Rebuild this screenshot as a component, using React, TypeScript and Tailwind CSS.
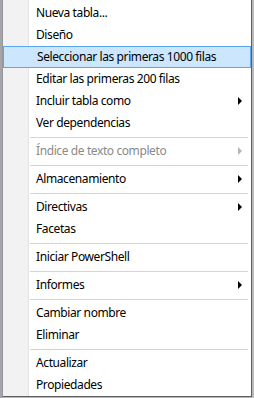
import React from 'react';

type Entry =
  | { kind: 'item'; label: string; sub?: boolean; disabled?: boolean; active?: boolean }
  | { kind: 'sep' };

const entries: Entry[] = [
  { kind: 'item', label: 'Nueva tabla...' },
  { kind: 'item', label: 'Diseño' },
  { kind: 'item', label: 'Seleccionar las primeras 1000 filas', active: true },
  { kind: 'item', label: 'Editar las primeras 200 filas' },
  { kind: 'item', label: 'Incluir tabla como', sub: true },
  { kind: 'item', label: 'Ver dependencias' },
  { kind: 'sep' },
  { kind: 'item', label: 'Índice de texto completo', sub: true, disabled: true },
  { kind: 'sep' },
  { kind: 'item', label: 'Almacenamiento', sub: true },
  { kind: 'sep' },
  { kind: 'item', label: 'Directivas', sub: true },
  { kind: 'item', label: 'Facetas' },
  { kind: 'sep' },
  { kind: 'item', label: 'Iniciar PowerShell' },
  { kind: 'sep' },
  { kind: 'item', label: 'Informes', sub: true },
  { kind: 'sep' },
  { kind: 'item', label: 'Cambiar nombre' },
  { kind: 'item', label: 'Eliminar' },
  { kind: 'sep' },
  { kind: 'item', label: 'Actualizar' },
  { kind: 'item', label: 'Propiedades' },
];

export default function App() {
  return (
    <div className="w-[254px] h-[398px] bg-[#b9b9b9] flex overflow-hidden">
      {/* window behind the menu */}
      <div className="w-[2px] bg-[#a4a4ac]" />
      <div className="flex flex-col w-[250px]">
        <div className="w-[250px] h-[397px] border-l border-r border-b border-[#979797] border-r-[#5f5f5f] border-b-[#5f5f5f] bg-[linear-gradient(to_right,#f2f2f2_0,#f2f2f2_25px,#e2e3e3_25px,#e2e3e3_26px,#ffffff_26px)] pt-[2px] text-[12px] tracking-[-0.4px] text-black font-['Noto_Sans',sans-serif]">
          {entries.map((e, i) =>
            e.kind === 'sep' ? (
              <div key={i} className="h-[6px] pl-[27px] pr-[3px] flex items-center">
                <div className="h-px w-full bg-[#d5d5d5]" />
              </div>
            ) : (
              <div
                key={i}
                className={`h-[22px] flex items-center justify-between pl-[33px] pr-[9px] ${
                  e.active ? 'bg-[#cce6fd] border border-[#5aa6f0] pl-[32px] pr-[8px]' : ''
                } ${e.disabled ? 'text-[#8a8a8a]' : ''}`}
              >
                <span className="leading-none">{e.label}</span>
                {e.sub && (
                  <span
                    className={`w-0 h-0 border-y-[4px] border-y-transparent border-l-[4px] ${
                      e.disabled ? 'border-l-[#b5b5b5]' : 'border-l-black'
                    }`}
                  />
                )}
              </div>
            )
          )}
        </div>
      </div>
    </div>
  );
}
